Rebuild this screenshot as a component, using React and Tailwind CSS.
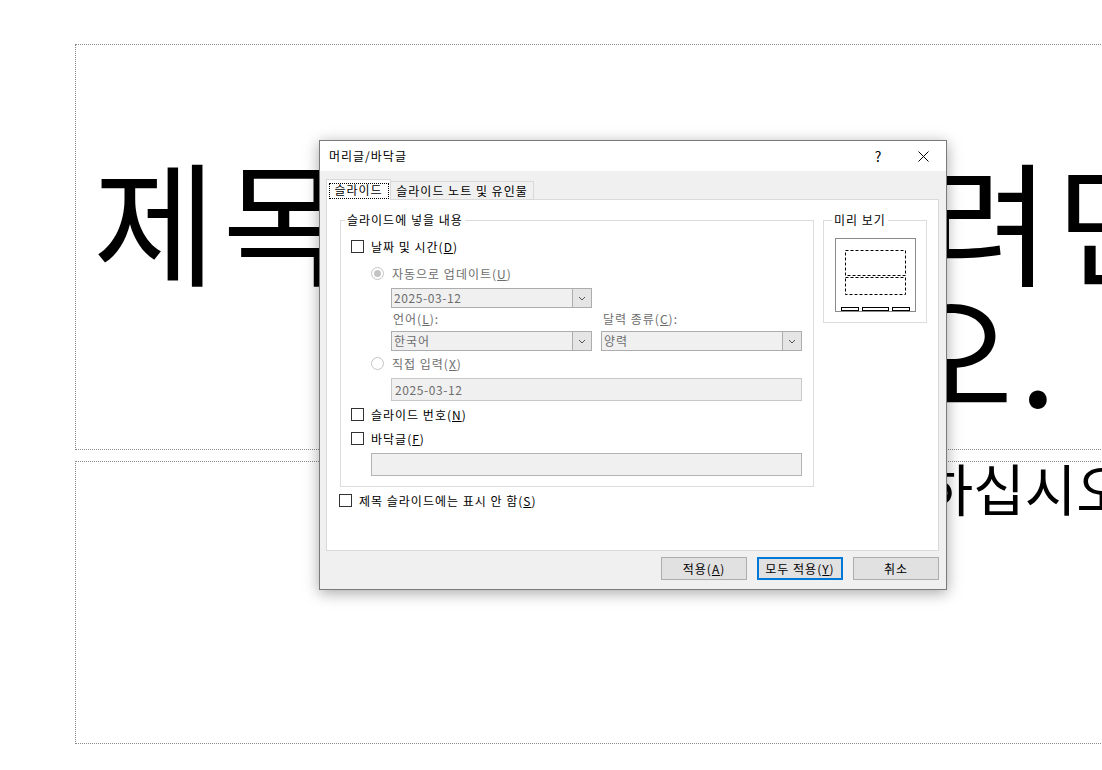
import React from "react";

function Mn({ k }) {
  return (
    <>
      (<u>{k}</u>)
    </>
  );
}

function Check({ children, className = "" }) {
  return (
    <div className={`flex items-center h-[13px] ${className}`}>
      <span className="w-[13px] h-[13px] border border-[#333333] bg-white shrink-0" />
      <span className="ml-[7px] leading-[16px] whitespace-nowrap">{children}</span>
    </div>
  );
}

function Radio({ children, checked, className = "" }) {
  return (
    <div className={`flex items-center h-[13px] ${className}`}>
      <span className="w-[13px] h-[13px] rounded-full border border-[#c4c4c4] bg-white shrink-0 flex items-center justify-center">
        {checked && <span className="w-[7px] h-[7px] rounded-full bg-[#c4c4c4]" />}
      </span>
      <span className="ml-[8px] leading-[16px] whitespace-nowrap text-[#6d6d6d]">{children}</span>
    </div>
  );
}

function Combo({ value, digits }) {
  return (
    <div className="w-[201px] h-[20px] border border-[#adadad] bg-[#f0f0f0] flex">
      <span className={`flex-1 pl-[2px] leading-[18px] text-[#6d6d6d] ${digits ? "tracking-[0.6px]" : ""}`}>
        {value}
      </span>
      <span className="w-[19px] border-l border-[#adadad] bg-[#e5e5e5] flex items-center justify-center">
        <svg width="8" height="5" viewBox="0 0 8 5">
          <path d="M1 1 L4 4 L7 1" fill="none" stroke="#555555" strokeWidth="1" />
        </svg>
      </span>
    </div>
  );
}

function Button({ children, primary }) {
  return (
    <button
      className={`h-[23px] w-[86px] flex items-center justify-center bg-[#e1e1e1] ${
        primary ? "border-2 border-[#0078d7]" : "border border-[#adadad]"
      }`}
    >
      {children}
    </button>
  );
}

function Preview() {
  return (
    <svg width="81" height="74" viewBox="0 0 81 74">
      <rect x="0.5" y="0.5" width="80" height="73" fill="white" stroke="#8a8a8a" />
      <rect x="10.5" y="12.5" width="60" height="25" fill="none" stroke="black" strokeDasharray="3 2" />
      <rect x="10.5" y="39.5" width="60" height="17" fill="none" stroke="black" strokeDasharray="3 2" />
      <rect x="6.5" y="69.5" width="17" height="3" fill="white" stroke="black" />
      <rect x="27.5" y="69.5" width="26" height="3" fill="white" stroke="black" />
      <rect x="57.5" y="69.5" width="17" height="3" fill="white" stroke="black" />
    </svg>
  );
}

export default function App() {
  return (
    <div className="relative w-[1102px] h-[770px] overflow-hidden bg-white text-black font-['Noto_Sans_CJK_KR',sans-serif]">
      {/* slide */}
      <div className="flex flex-col pl-[75px] pt-[44px]">
        <div className="w-[1574px] h-[406px] border border-dotted border-[#8a8a8a] flex flex-col justify-end items-center pb-[34px] text-[134px] leading-[131px] tracking-[6px] [word-spacing:22px] whitespace-nowrap">
          <div>제목을 입력하려면 클릭하</div>
          <div className="pr-[30px]">십시오.</div>
        </div>
        <div className="mt-[11px] w-[1574px] h-[283px] border border-dotted border-[#8a8a8a] flex flex-col items-center pt-[2px] text-[56px] leading-[46px] [word-spacing:10px] whitespace-nowrap">
          <div className="pr-[6px]">부제목을 입력하십시오</div>
        </div>
      </div>

      {/* dialog */}
      <div className="absolute left-[319px] top-[140px] w-[628px] h-[450px] border border-[#7a7a7a] bg-white flex flex-col text-[12px] tracking-[1px] shadow-[0_3px_14px_rgba(0,0,0,0.35)]">
        <div className="h-[30px] flex items-center bg-white">
          <span className="pl-[9px] leading-[16px]">머리글/바닥글</span>
          <div className="ml-auto flex h-full">
            <span className="w-[46px] h-full flex items-center justify-center text-[14px] pl-[3px]">?</span>
            <span className="w-[46px] h-full flex items-center justify-center">
              <svg width="11" height="11" viewBox="0 0 11 11">
                <path d="M0.5 0.5 L10.5 10.5 M10.5 0.5 L0.5 10.5" stroke="black" strokeWidth="1" />
              </svg>
            </span>
          </div>
        </div>

        <div className="flex-1 bg-[#f0f0f0] pl-[6px] pr-[7px] pt-[8px] flex flex-col">
          {/* tabs */}
          <div className="h-[20px] flex items-start">
            <div className="relative z-10 w-[65px] h-[21px] border border-b-0 border-[#d9d9d9] bg-white flex items-center justify-center">
              <span className="absolute left-[2px] top-[3px] right-[1px] bottom-[1px] border border-dotted border-black" />
              <span className="leading-[16px]">슬라이드</span>
            </div>
            <div className="mt-[2px] w-[143px] h-[18px] border border-b-0 border-l-0 border-[#d9d9d9] bg-[#f0f0f0] flex items-center justify-center">
              <span className="leading-[16px]">슬라이드 노트 및 유인물</span>
            </div>
          </div>

          {/* panel */}
          <div className="h-[352px] border border-[#d9d9d9] bg-white flex flex-col">
            <div className="flex mt-[20px] ml-[13px] gap-[9px]">
              <div className="relative w-[474px] h-[267px] border border-[#dcdcdc] flex flex-col">
                <span className="absolute left-[4px] top-[-9px] px-[2px] bg-white leading-[16px]">
                  슬라이드에 넣을 내용
                </span>
                <Check className="mt-[19px] ml-[10px]">
                  날짜 및 시간<Mn k="D" />
                </Check>
                <Radio checked className="mt-[14px] ml-[30px]">
                  자동으로 업데이트<Mn k="U" />
                </Radio>
                <div className="mt-[8px] ml-[50px]">
                  <Combo value="2025-03-12" digits />
                </div>
                <div className="mt-[3px] ml-[50px] flex gap-[9px] h-[16px] leading-[16px] text-[#6d6d6d]">
                  <span className="w-[201px] pl-[2px]">
                    언어<Mn k="L" />:
                  </span>
                  <span className="w-[201px] pl-[2px]">
                    달력 종류<Mn k="C" />:
                  </span>
                </div>
                <div className="mt-[4px] ml-[50px] flex gap-[9px]">
                  <Combo value="한국어" />
                  <Combo value="양력" />
                </div>
                <Radio className="mt-[6px] ml-[30px]">
                  직접 입력<Mn k="X" />
                </Radio>
                <div className="mt-[8px] ml-[50px] w-[411px] h-[23px] border border-[#c8c8c8] bg-[#f0f0f0] pl-[3px] leading-[21px] text-[#6d6d6d] tracking-[0.6px]">
                  2025-03-12
                </div>
                <Check className="mt-[7px] ml-[10px]">
                  슬라이드 번호<Mn k="N" />
                </Check>
                <Check className="mt-[11px] ml-[10px]">
                  바닥글<Mn k="F" />
                </Check>
                <div className="mt-[8px] ml-[30px] w-[431px] h-[23px] border border-[#b4b4b4] bg-[#f0f0f0]" />
              </div>

              <div className="relative w-[104px] h-[103px] border border-[#dcdcdc]">
                <span className="absolute left-[8px] top-[-9px] px-[2px] bg-white leading-[16px]">미리 보기</span>
                <div className="ml-[11px] mt-[17px] w-[81px] h-[74px]">
                  <Preview />
                </div>
              </div>
            </div>

            <Check className="mt-[7px] ml-[12px]">
              제목 슬라이드에는 표시 안 함<Mn k="S" />
            </Check>
          </div>

          {/* buttons */}
          <div className="mt-[6px] flex justify-end gap-[10px]">
            <Button>
              적용<Mn k="A" />
            </Button>
            <Button primary>
              모두 적용<Mn k="Y" />
            </Button>
            <Button>취소</Button>
          </div>
        </div>
      </div>
    </div>
  );
}
